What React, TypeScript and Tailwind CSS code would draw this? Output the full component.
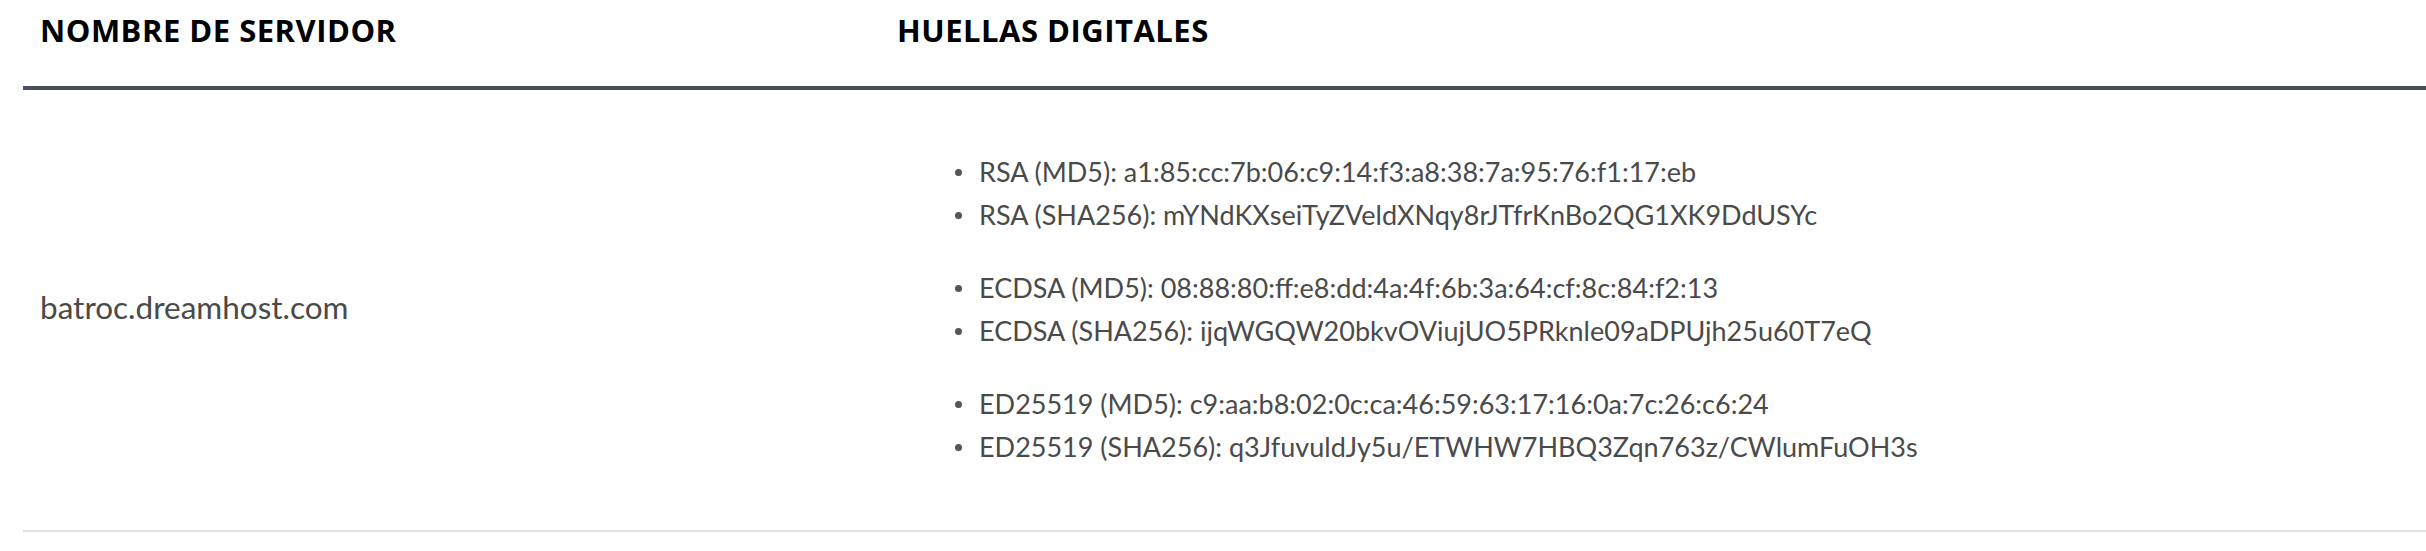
import React from "react";

const groups: [string, string][][] = [
  [
    ["RSA (MD5)", "a1:85:cc:7b:06:c9:14:f3:a8:38:7a:95:76:f1:17:eb"],
    ["RSA (SHA256)", "mYNdKXseiTyZVeldXNqy8rJTfrKnBo2QG1XK9DdUSYc"],
  ],
  [
    ["ECDSA (MD5)", "08:88:80:ff:e8:dd:4a:4f:6b:3a:64:cf:8c:84:f2:13"],
    ["ECDSA (SHA256)", "ijqWGQW20bkvOViujUO5PRknle09aDPUjh25u60T7eQ"],
  ],
  [
    ["ED25519 (MD5)", "c9:aa:b8:02:0c:ca:46:59:63:17:16:0a:7c:26:c6:24"],
    ["ED25519 (SHA256)", "q3JfuvuldJy5u/ETWHW7HBQ3Zqn763z/CWlumFuOH3s"],
  ],
];

export default function App() {
  return (
    <div className="w-[2426px] h-[551px] bg-white pl-[23px] overflow-hidden">
      <div className="flex h-[90px] border-b-4 border-[#464f5a]">
        <div className="w-[857px] pl-[17px] pt-[10px]">
          <span className="font-['Open_Sans',sans-serif] font-bold text-[31px] leading-[40px] text-black tracking-[0.5px]">
            NOMBRE DE SERVIDOR
          </span>
        </div>
        <div className="flex-1 pl-[17px] pt-[10px]">
          <span className="font-['Open_Sans',sans-serif] font-bold text-[31px] leading-[40px] text-black tracking-[0.5px]">
            HUELLAS DIGITALES
          </span>
        </div>
      </div>
      <div className="flex items-center h-[442px] border-b-2 border-[#dde3e8]">
        <div className="w-[857px] pl-[17px] pb-[6px]">
          <span className="font-['Lato',sans-serif] text-[31.5px] leading-[40px] text-[#4a4a4a]">
            batroc.dreamhost.com
          </span>
        </div>
        <div className="flex-1 pl-[75px] flex flex-col gap-[30px]">
          {groups.map((g, i) => (
            <ul key={i} className="flex flex-col">
              {g.map(([k, v]) => (
                <li
                  key={k}
                  className="flex items-center h-[43px] font-['Lato',sans-serif] text-[27px] text-[#4a4a4a]"
                >
                  <span className="w-[7px] h-[7px] rounded-full bg-[#555] mr-[17px] shrink-0" />
                  <span>
                    {k}: {v}
                  </span>
                </li>
              ))}
            </ul>
          ))}
        </div>
      </div>
    </div>
  );
}
